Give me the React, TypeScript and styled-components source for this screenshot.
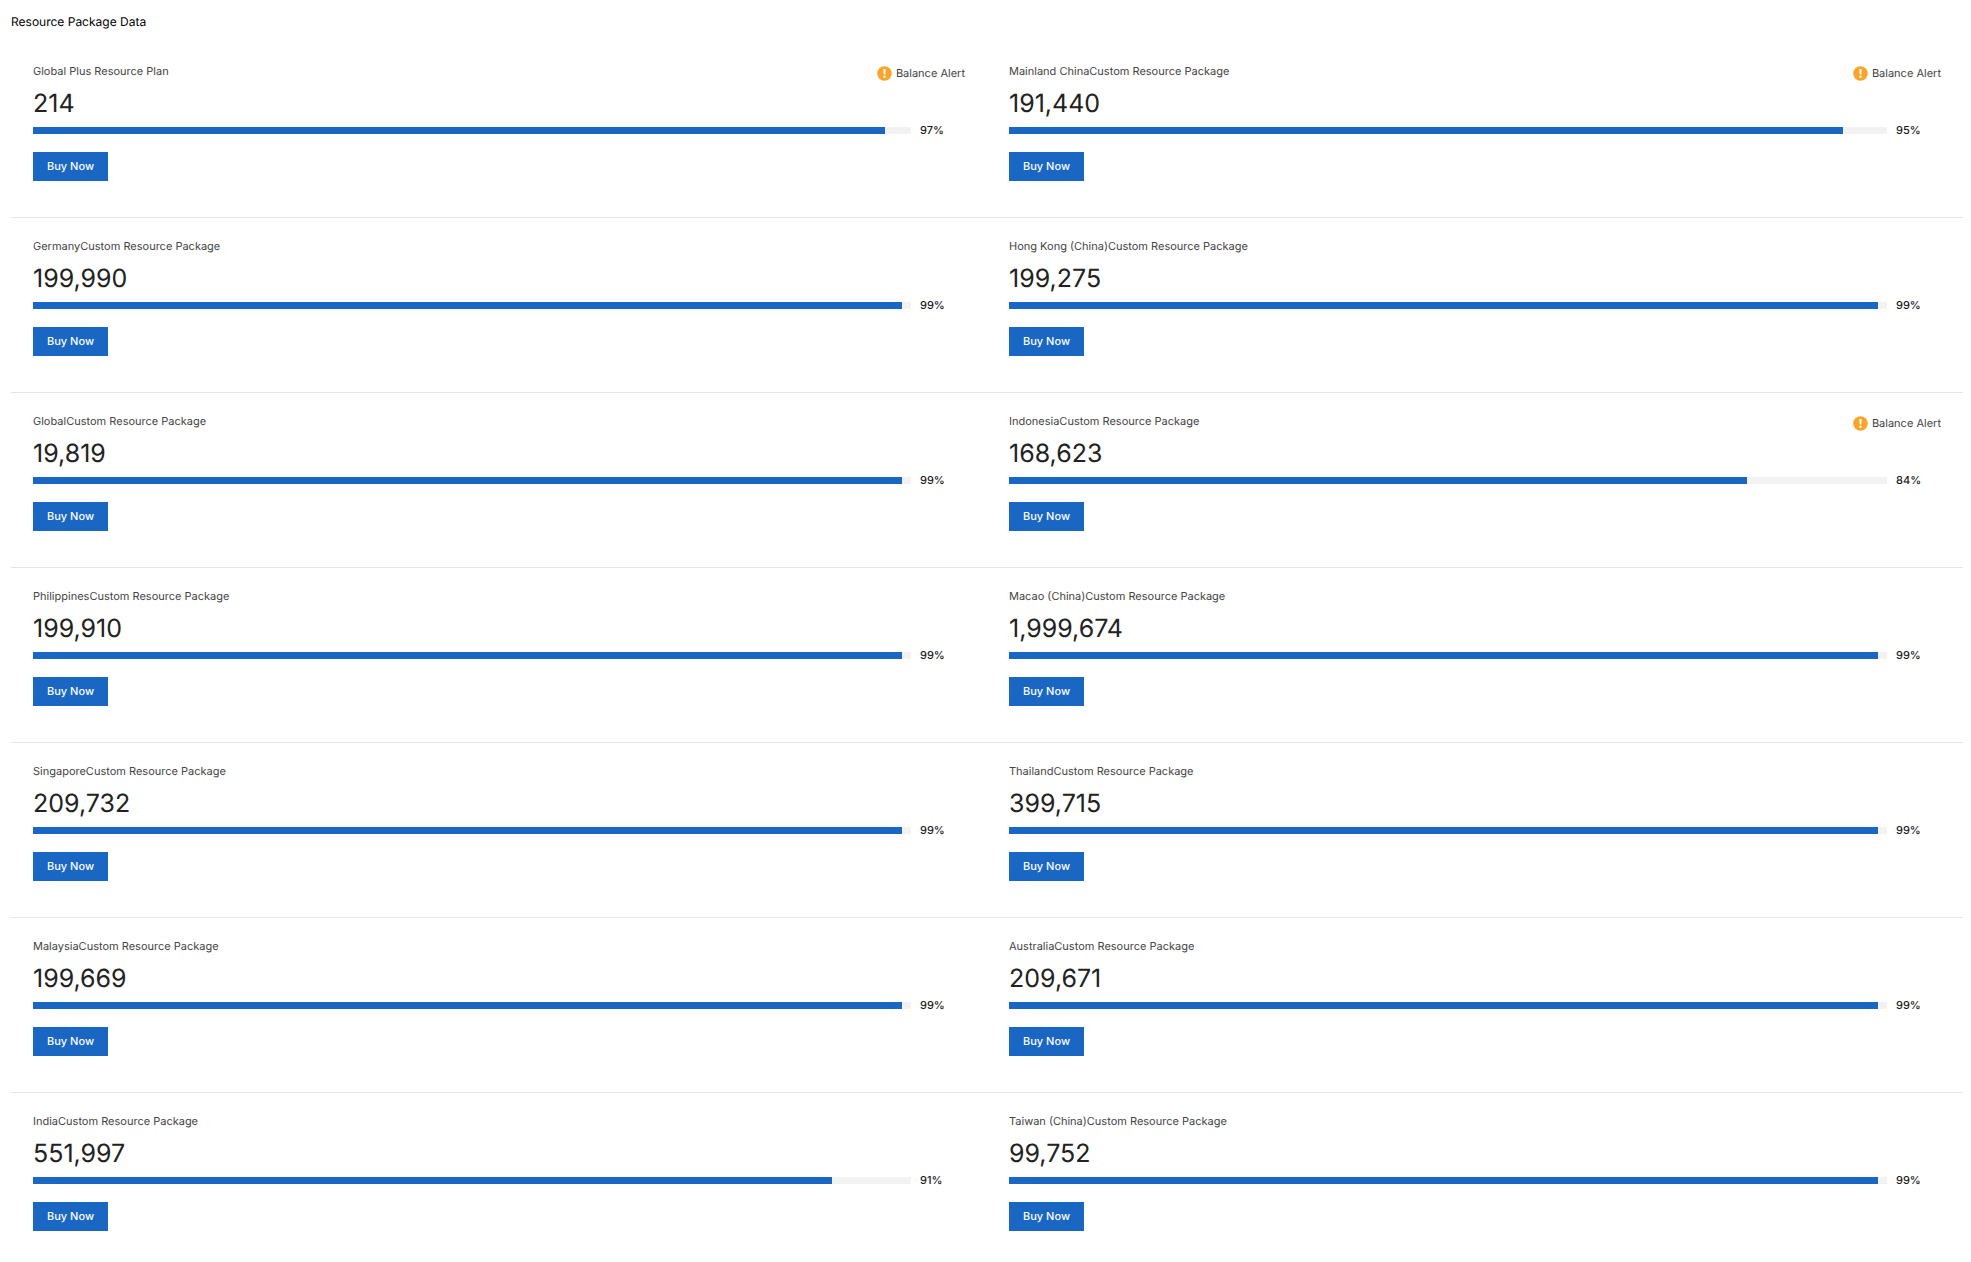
import React from "react";
import styled, { createGlobalStyle } from "styled-components";

const GlobalStyle = createGlobalStyle`
  *, *::before, *::after { box-sizing: border-box; }
  body {
    margin: 0;
    background: #fff;
    color: #000;
    font-family: Inter, "Liberation Sans", sans-serif;
    text-rendering: geometricPrecision;
  }
`;

const Page = styled.main`
  padding: 12px 8px 0 11px;
`;

const Title = styled.h1`
  margin: 0 0 11px;
  font-size: 12px;
  font-weight: 400;
  line-height: 20px;
`;

const PackageGrid = styled.section`
  display: grid;
  grid-template-columns: repeat(2, minmax(0, 1fr));
`;

const Card = styled.article`
  padding: 22px 22px 36px;
  border-bottom: 1px solid #e5e5e5;

  &:nth-last-child(-n + 2) {
    border-bottom: 0;
  }
`;

const CardHeader = styled.header`
  display: flex;
  justify-content: space-between;
  height: 22px;
`;

const Name = styled.h2`
  margin: 0;
  color: #444;
  font-size: 11px;
  font-weight: 400;
  line-height: 13px;
`;

const Alert = styled.span`
  display: flex;
  align-items: center;
  gap: 4px;
  height: 17px;
  color: #444;
  font-size: 11px;
  line-height: 17px;
`;

const Amount = styled.p`
  margin: 0 0 2px;
  color: #222;
  font-size: 25px;
  line-height: 34px;
`;

const Usage = styled.div`
  display: flex;
  align-items: center;
  gap: 9px;
  margin-bottom: 14px;
`;

const Track = styled.div`
  flex: 1;
  height: 7px;
  background: #f2f2f2;
`;

const Fill = styled.div`
  height: 100%;
  background: #1966c3;
`;

const Percent = styled.span`
  width: 45px;
  color: #1a1a1a;
  font-size: 11px;
  font-weight: 500;
  line-height: 15px;
`;

const BuyButton = styled.button`
  display: block;
  height: 29px;
  padding: 0 14px;
  border: 0;
  background: #1966c3;
  color: #fff;
  font-family: inherit;
  font-size: 11px;
  font-weight: 500;
  line-height: 29px;
  text-rendering: inherit;
  cursor: pointer;
`;

const AlertIcon = () => (
  <svg width="15" height="15" viewBox="0 0 15 15" aria-hidden="true">
    <circle cx="7.5" cy="7.5" r="7.3" fill="#f7a62b" />
    <path d="M6.4 3h2.2l-.3 5.5H6.7z" fill="#fff" />
    <rect x="6.5" y="9.8" width="2" height="2" rx="0.4" fill="#fff" />
  </svg>
);

interface ResourcePackage {
  name: string;
  amount: string;
  percent: number;
  alert?: boolean;
}

const packages: ResourcePackage[] = [
  { name: "Global Plus Resource Plan", amount: "214", percent: 97, alert: true },
  { name: "Mainland ChinaCustom Resource Package", amount: "191,440", percent: 95, alert: true },
  { name: "GermanyCustom Resource Package", amount: "199,990", percent: 99 },
  { name: "Hong Kong (China)Custom Resource Package", amount: "199,275", percent: 99 },
  { name: "GlobalCustom Resource Package", amount: "19,819", percent: 99 },
  { name: "IndonesiaCustom Resource Package", amount: "168,623", percent: 84, alert: true },
  { name: "PhilippinesCustom Resource Package", amount: "199,910", percent: 99 },
  { name: "Macao (China)Custom Resource Package", amount: "1,999,674", percent: 99 },
  { name: "SingaporeCustom Resource Package", amount: "209,732", percent: 99 },
  { name: "ThailandCustom Resource Package", amount: "399,715", percent: 99 },
  { name: "MalaysiaCustom Resource Package", amount: "199,669", percent: 99 },
  { name: "AustraliaCustom Resource Package", amount: "209,671", percent: 99 },
  { name: "IndiaCustom Resource Package", amount: "551,997", percent: 91 },
  { name: "Taiwan (China)Custom Resource Package", amount: "99,752", percent: 99 },
];

const PackageCard = ({ name, amount, percent, alert }: ResourcePackage) => (
  <Card>
    <CardHeader>
      <Name>{name}</Name>
      {alert && (
        <Alert>
          <AlertIcon />
          Balance Alert
        </Alert>
      )}
    </CardHeader>
    <Amount>{amount}</Amount>
    <Usage>
      <Track>
        <Fill style={{ width: `${percent}%` }} />
      </Track>
      <Percent>{percent}%</Percent>
    </Usage>
    <BuyButton type="button">Buy Now</BuyButton>
  </Card>
);

export default function App() {
  return (
    <>
      <GlobalStyle />
      <Page>
        <Title>Resource Package Data</Title>
        <PackageGrid>
          {packages.map((item) => (
            <PackageCard key={item.name} {...item} />
          ))}
        </PackageGrid>
      </Page>
    </>
  );
}
